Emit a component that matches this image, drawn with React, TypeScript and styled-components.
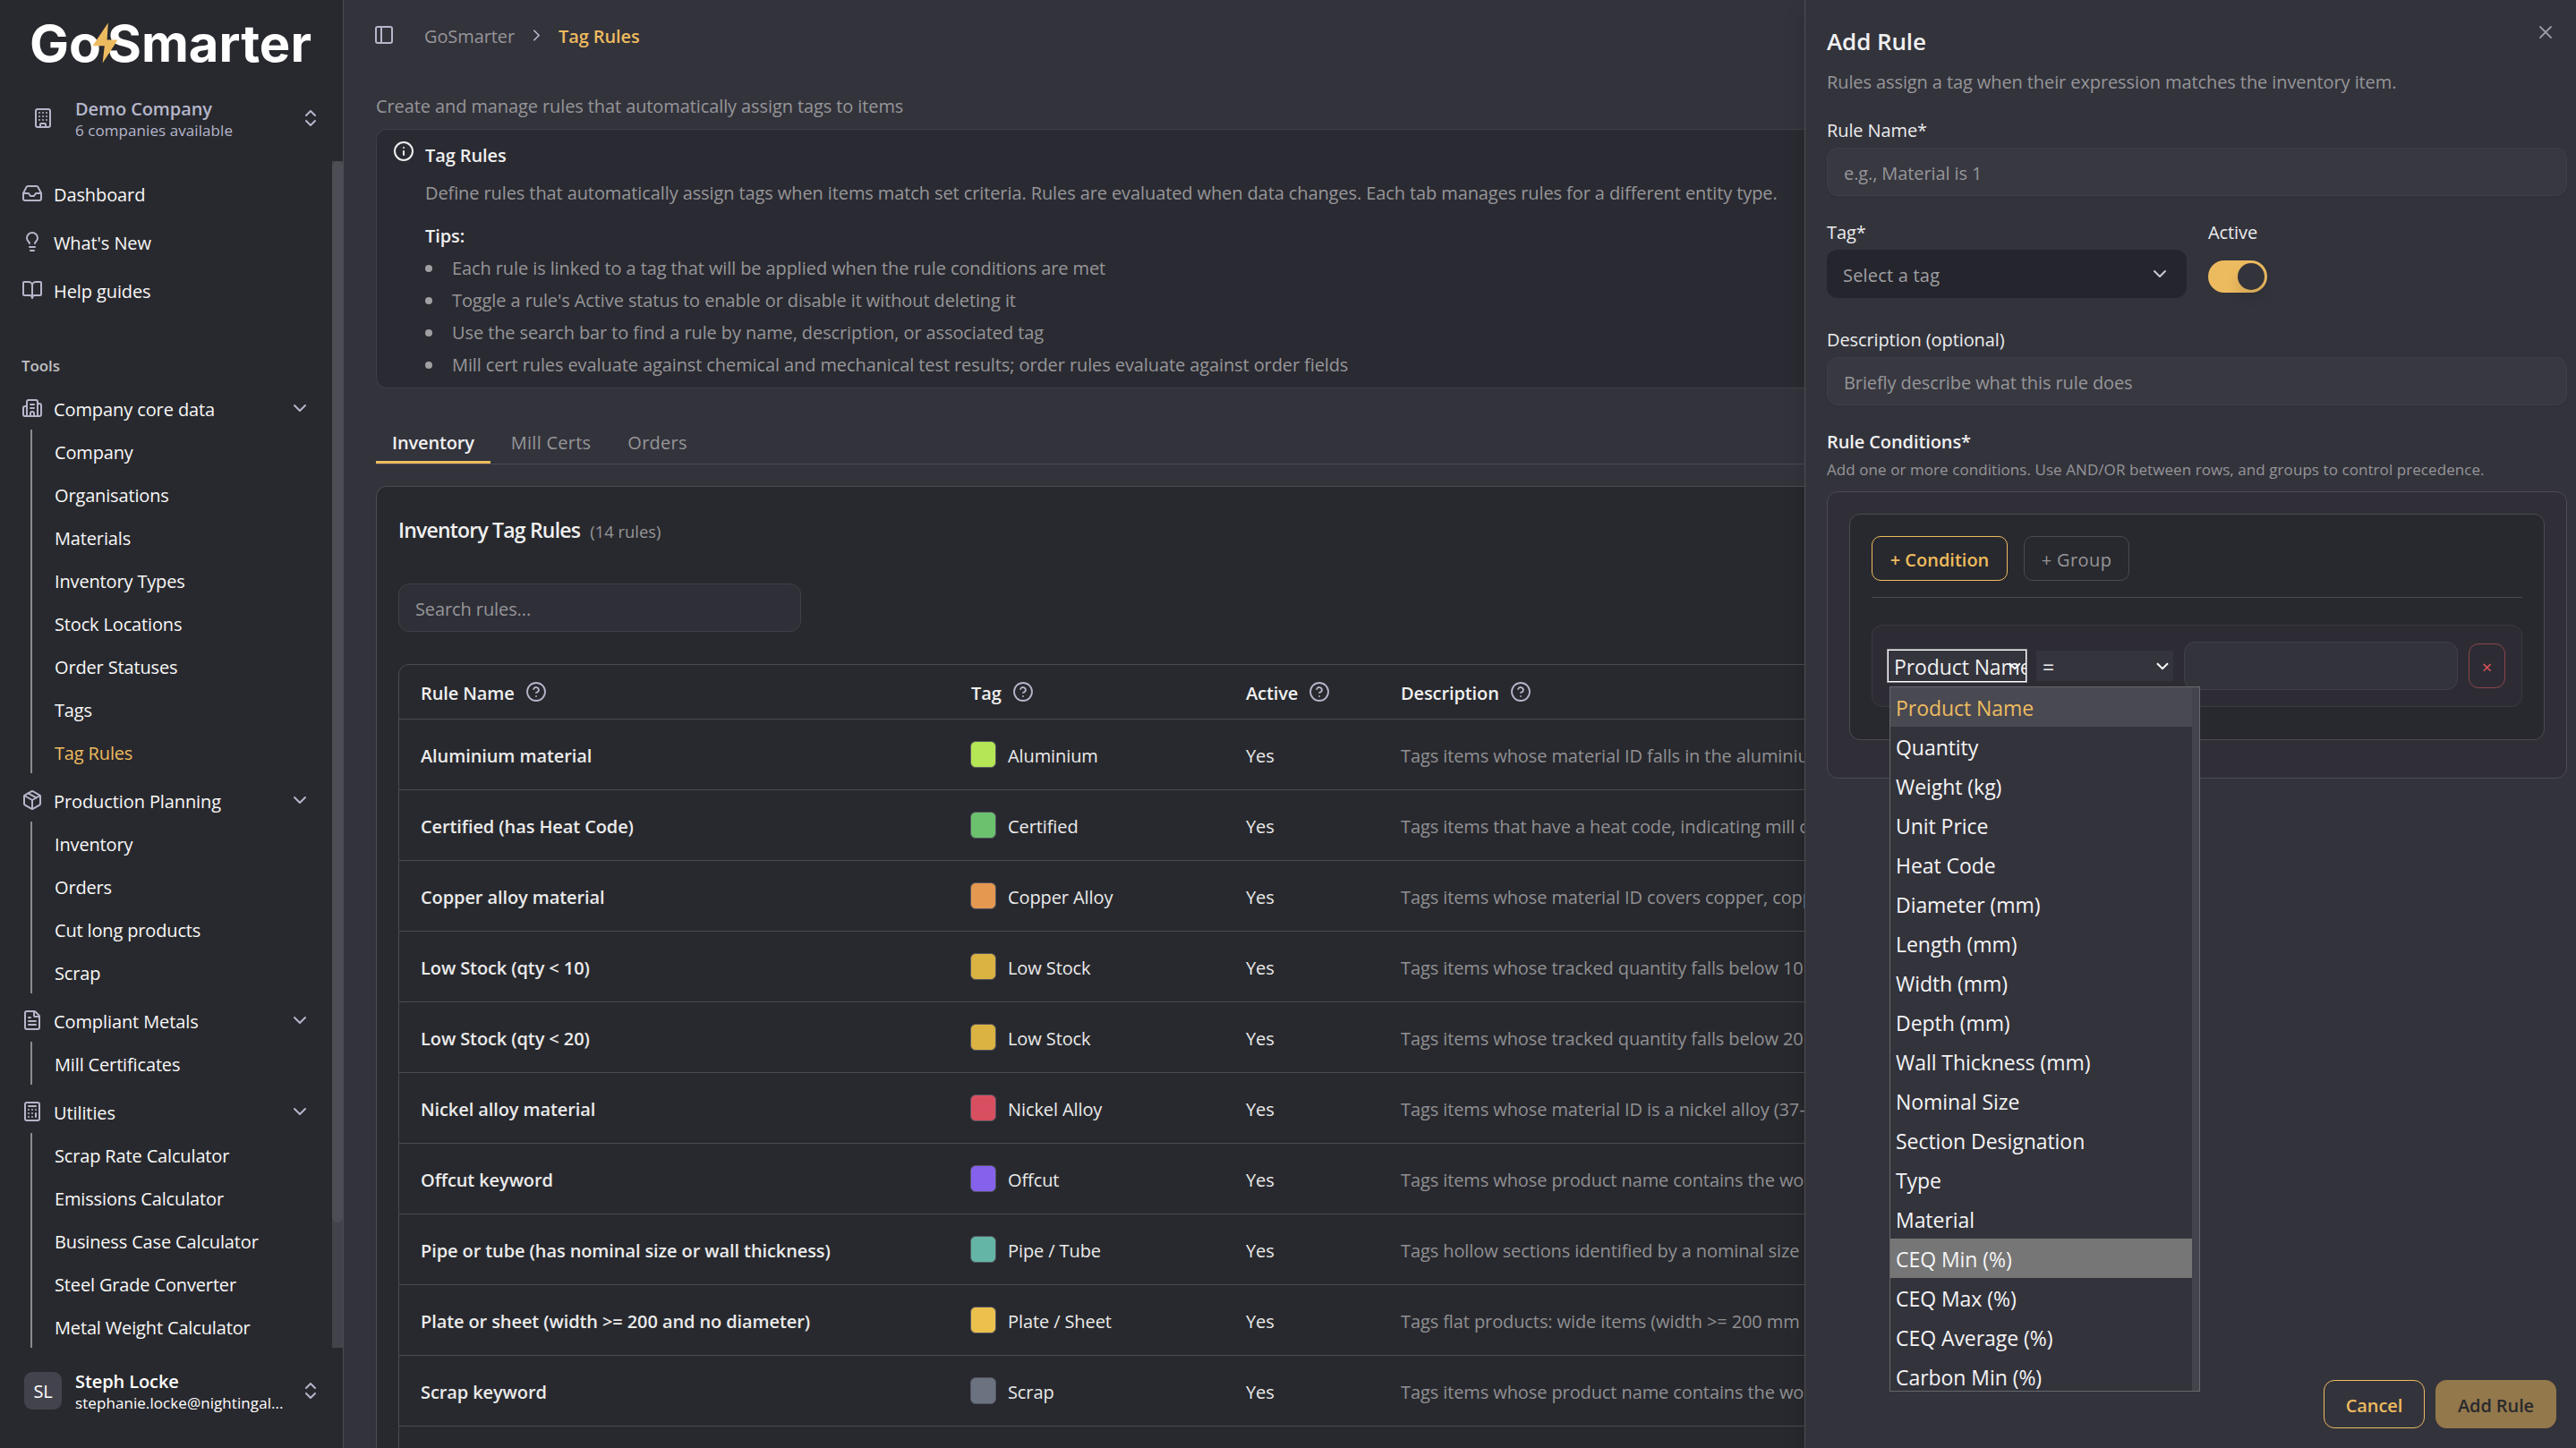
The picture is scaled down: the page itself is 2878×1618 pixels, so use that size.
import React from 'react';
import styled, { createGlobalStyle, css } from 'styled-components';
import {
  BookOpen,
  Building,
  Building2,
  Calculator,
  ChevronDown,
  ChevronRight,
  ChevronsUpDown,
  CircleHelp,
  FileText,
  Inbox,
  Info,
  Lightbulb,
  Package,
  PanelLeft,
  X
} from 'lucide-react';

const colors = {
  page: '#33333c',
  sidebar: '#28292e',
  card: '#28292e',
  border: '#4a4b53',
  borderSoft: '#3f3f48',
  text: '#f0f0f0',
  muted: '#969698',
  icon: '#b5b6ca',
  accent: '#edbb5f'
};

const NAV_LINKS = [
  { label: 'Dashboard', icon: Inbox },
  { label: "What's New", icon: Lightbulb },
  { label: 'Help guides', icon: BookOpen }
];

const NAV_GROUPS = [
  {
    label: 'Company core data',
    icon: Building2,
    items: ['Company', 'Organisations', 'Materials', 'Inventory Types', 'Stock Locations', 'Order Statuses', 'Tags', 'Tag Rules']
  },
  {
    label: 'Production Planning',
    icon: Package,
    items: ['Inventory', 'Orders', 'Cut long products', 'Scrap']
  },
  {
    label: 'Compliant Metals',
    icon: FileText,
    items: ['Mill Certificates']
  },
  {
    label: 'Utilities',
    icon: Calculator,
    items: ['Scrap Rate Calculator', 'Emissions Calculator', 'Business Case Calculator', 'Steel Grade Converter', 'Metal Weight Calculator']
  }
];

const TIPS = [
  'Each rule is linked to a tag that will be applied when the rule conditions are met',
  "Toggle a rule's Active status to enable or disable it without deleting it",
  'Use the search bar to find a rule by name, description, or associated tag',
  'Mill cert rules evaluate against chemical and mechanical test results; order rules evaluate against order fields'
];

const TABS = ['Inventory', 'Mill Certs', 'Orders'];

const COLUMNS = ['Rule Name', 'Tag', 'Active', 'Description'];

const RULES = [
  { name: 'Aluminium material', tag: 'Aluminium', color: '#b5e655', description: 'Tags items whose material ID falls in the aluminium' },
  { name: 'Certified (has Heat Code)', tag: 'Certified', color: '#6bc16e', description: 'Tags items that have a heat code, indicating mill certs' },
  { name: 'Copper alloy material', tag: 'Copper Alloy', color: '#e59850', description: 'Tags items whose material ID covers copper, copper' },
  { name: 'Low Stock (qty < 10)', tag: 'Low Stock', color: '#dbb342', description: 'Tags items whose tracked quantity falls below 10' },
  { name: 'Low Stock (qty < 20)', tag: 'Low Stock', color: '#dbb342', description: 'Tags items whose tracked quantity falls below 20' },
  { name: 'Nickel alloy material', tag: 'Nickel Alloy', color: '#d94f62', description: 'Tags items whose material ID is a nickel alloy (37-' },
  { name: 'Offcut keyword', tag: 'Offcut', color: '#8561ec', description: 'Tags items whose product name contains the word' },
  { name: 'Pipe or tube (has nominal size or wall thickness)', tag: 'Pipe / Tube', color: '#64b5a6', description: 'Tags hollow sections identified by a nominal size' },
  { name: 'Plate or sheet (width >= 200 and no diameter)', tag: 'Plate / Sheet', color: '#ecc04c', description: 'Tags flat products: wide items (width >= 200 mm' },
  { name: 'Scrap keyword', tag: 'Scrap', color: '#6b7280', description: 'Tags items whose product name contains the word' }
];

const FIELDS = [
  'Product Name',
  'Quantity',
  'Weight (kg)',
  'Unit Price',
  'Heat Code',
  'Diameter (mm)',
  'Length (mm)',
  'Width (mm)',
  'Depth (mm)',
  'Wall Thickness (mm)',
  'Nominal Size',
  'Section Designation',
  'Type',
  'Material',
  'CEQ Min (%)',
  'CEQ Max (%)',
  'CEQ Average (%)',
  'Carbon Min (%)'
];

const Logo = () => (
  <svg width="383" height="84" viewBox="0 0 383 84">
    <g fill="#ffffff" fontFamily="Inter, sans-serif" fontWeight="700" fontSize="56" letterSpacing="0">
      <text x="33" y="68.5" textLength="80" lengthAdjust="spacingAndGlyphs">Go</text>
      <text x="120" y="68.5" textLength="228" lengthAdjust="spacingAndGlyphs">Smarter</text>
    </g>
    <polygon points="120.8,25.5 103.5,51.3 116.8,51.3 114.6,70.5 131.6,44.5 119.6,44.5" fill={colors.accent} />
  </svg>
);

const Sidebar = () => (
  <SidebarWrapper>
    <LogoRow>
      <Logo />
    </LogoRow>
    <AccountRow $color={colors.icon}>
      <AccountIcon>
        <Building size={24} />
      </AccountIcon>
      <AccountInfo>
        <AccountTitle>Demo Company</AccountTitle>
        <AccountSub>6 companies available</AccountSub>
      </AccountInfo>
      <ChevronsUpDown size={24} color={colors.icon} />
    </AccountRow>
    <NavScroll>
      <Nav>
        {NAV_LINKS.map(({ label, icon: Icon }) => (
          <NavLink key={label}>
            <Icon size={24} color={colors.icon} />
            <NavText>{label}</NavText>
          </NavLink>
        ))}
        <NavHeading>Tools</NavHeading>
        {NAV_GROUPS.map(({ label, icon: Icon, items }) => (
          <NavGroup key={label}>
            <NavGroupHeader>
              <Icon size={24} color={colors.icon} />
              <NavText>{label}</NavText>
              <ChevronDown size={24} color={colors.icon} />
            </NavGroupHeader>
            <NavSubList>
              {items.map((item) => (
                <NavSubItem key={item} $active={item === 'Tag Rules'}>{item}</NavSubItem>
              ))}
            </NavSubList>
          </NavGroup>
        ))}
      </Nav>
      <ScrollTrack>
        <ScrollThumb />
      </ScrollTrack>
    </NavScroll>
    <AccountRow $color="#ffffff">
      <Avatar>SL</Avatar>
      <AccountInfo>
        <AccountTitle>Steph Locke</AccountTitle>
        <AccountSub>stephanie.locke@nightingal...</AccountSub>
      </AccountInfo>
      <ChevronsUpDown size={24} color={colors.icon} />
    </AccountRow>
  </SidebarWrapper>
);

const TagRulesPage = () => (
  <Main>
    <TopBar>
      <PanelLeft size={24} color={colors.icon} />
      <Breadcrumb>
        <Crumb>GoSmarter</Crumb>
        <ChevronRight size={21} color={colors.icon} />
        <Crumb $current>Tag Rules</Crumb>
      </Breadcrumb>
    </TopBar>
    <Subtitle>Create and manage rules that automatically assign tags to items</Subtitle>
    <InfoCard>
      <Info size={24} color={colors.text} />
      <InfoBody>
        <InfoTitle>Tag Rules</InfoTitle>
        <InfoText>
          Define rules that automatically assign tags when items match set criteria. Rules are evaluated when data changes. Each tab manages rules for a different entity type.
        </InfoText>
        <TipsTitle>Tips:</TipsTitle>
        <TipList>
          {TIPS.map((tip) => (
            <Tip key={tip}>{tip}</Tip>
          ))}
        </TipList>
      </InfoBody>
    </InfoCard>
    <TabBar>
      {TABS.map((tab, i) => (
        <Tab key={tab} $active={i === 0}>{tab}</Tab>
      ))}
    </TabBar>
    <RulesCard>
      <RulesTitle>
        Inventory Tag Rules <RulesCount>(14 rules)</RulesCount>
      </RulesTitle>
      <SearchBox>Search rules...</SearchBox>
      <Table>
        <HeaderRow>
          {COLUMNS.map((column) => (
            <HeaderCell key={column}>
              <span>{column}</span>
              <CircleHelp size={24} color={colors.icon} strokeWidth={1.8} />
            </HeaderCell>
          ))}
        </HeaderRow>
        {RULES.map((rule) => (
          <Row key={rule.name}>
            <Cell $strong>{rule.name}</Cell>
            <Cell>
              <Swatch $color={rule.color} />
              {rule.tag}
            </Cell>
            <Cell>Yes</Cell>
            <Cell $muted>{rule.description}</Cell>
          </Row>
        ))}
        <Row />
      </Table>
    </RulesCard>
  </Main>
);

const AddRuleSheet = () => (
  <Sheet>
    <CloseButton>
      <X size={24} strokeWidth={1.8} />
    </CloseButton>
    <SheetTitle>Add Rule</SheetTitle>
    <SheetDescription>Rules assign a tag when their expression matches the inventory item.</SheetDescription>
    <Field>
      <Label>Rule Name*</Label>
      <TextInput>e.g., Material is 1</TextInput>
    </Field>
    <TagRow>
      <Field>
        <Label>Tag*</Label>
        <TagSelect>
          <span>Select a tag</span>
          <ChevronDown size={24} color="#c9c9d4" />
        </TagSelect>
      </Field>
      <Field>
        <Label>Active</Label>
        <Switch>
          <SwitchThumb />
        </Switch>
      </Field>
    </TagRow>
    <Field>
      <Label>Description (optional)</Label>
      <TextInput>Briefly describe what this rule does</TextInput>
    </Field>
    <ConditionsTitle>Rule Conditions*</ConditionsTitle>
    <ConditionsHint>Add one or more conditions. Use AND/OR between rows, and groups to control precedence.</ConditionsHint>
    <BuilderBox>
      <GroupBox>
        <GroupActions>
          <AddConditionButton>+ Condition</AddConditionButton>
          <AddGroupButton>+ Group</AddGroupButton>
        </GroupActions>
        <ConditionRow>
          <FieldPicker>
            <NativeSelect $focused>
              <span>Product Name</span>
              <SelectArrow />
            </NativeSelect>
            <Menu>
              <MenuItems>
                {FIELDS.map((field, i) => (
                  <MenuItem key={field} $selected={i === 0} $hovered={field === 'CEQ Min (%)'}>{field}</MenuItem>
                ))}
              </MenuItems>
              <MenuScroll />
            </Menu>
          </FieldPicker>
          <NativeSelect>
            <span>=</span>
            <SelectArrow />
          </NativeSelect>
          <ValueInput />
          <RemoveButton>×</RemoveButton>
        </ConditionRow>
      </GroupBox>
    </BuilderBox>
    <SheetFooter>
      <CancelButton>Cancel</CancelButton>
      <SubmitButton>Add Rule</SubmitButton>
    </SheetFooter>
  </Sheet>
);

const SelectArrow = () => (
  <ArrowSvg width="14" height="9" viewBox="0 0 14 9" fill="none" stroke="#ffffff" strokeWidth="2">
    <path d="M1 1.2l6 6 6-6" />
  </ArrowSvg>
);

const App: React.FC = () => (
  <>
    <GlobalStyle />
    <Layout>
      <Sidebar />
      <TagRulesPage />
      <AddRuleSheet />
    </Layout>
  </>
);

// Styled Components
const GlobalStyle = createGlobalStyle`
  * {
    box-sizing: border-box;
  }

  body {
    margin: 0;
    background: ${colors.page};
    color: ${colors.text};
    font-family: 'Open Sans', 'Noto Sans', sans-serif;
    font-size: 20px;
    line-height: 30px;
    letter-spacing: -0.1px;
  }

  svg {
    flex-shrink: 0;
  }
`;

const Layout = styled.div`
  position: relative;
  display: flex;
  width: 100vw;
  height: 100vh;
  overflow: hidden;
  white-space: nowrap;
`;

const SidebarWrapper = styled.aside`
  display: flex;
  flex-direction: column;
  flex-shrink: 0;
  width: 384px;
  background: ${colors.sidebar};
  border-right: 1px solid ${colors.border};
`;

const LogoRow = styled.div`
  height: 84px;

  svg {
    display: block;
  }
`;

const AccountRow = styled.div<{ $color: string }>`
  display: flex;
  align-items: center;
  height: 96px;
  padding: 0 24px 0 27px;
  color: ${({ $color }) => $color};
`;

const AccountIcon = styled.div`
  display: flex;
  justify-content: center;
  width: 42px;
`;

const Avatar = styled.div`
  display: flex;
  align-items: center;
  justify-content: center;
  width: 42px;
  height: 42px;
  padding-top: 2px;
  border-radius: 9px;
  background: #43434d;
`;

const AccountInfo = styled.div`
  flex: 1;
  min-width: 0;
  padding: 2px 0 0 15px;
`;

const AccountTitle = styled.div`
  font-weight: 600;
  line-height: 25px;
`;

const AccountSub = styled.div`
  font-size: 17px;
  line-height: 24px;
  letter-spacing: 0.07px;
`;

const NavScroll = styled.div`
  display: flex;
  height: 1326px;
`;

const Nav = styled.nav`
  flex: 1;
  padding: 9px 0 0 24px;
  color: #f8f8f8;
`;

const NavLink = styled.div`
  display: flex;
  align-items: center;
  gap: 12px;
  height: 54px;
`;

const NavText = styled.span`
  flex: 1;
  padding-top: 3px;
`;

const NavHeading = styled.div`
  height: 81px;
  padding-top: 43px;
  color: #bfbfc1;
  font-size: 17px;
  font-weight: 600;
`;

const NavGroup = styled.div`
  margin-bottom: 6px;
`;

const NavGroupHeader = styled(NavLink)`
  height: 48px;
  padding-right: 24px;
`;

const NavSubList = styled.div`
  margin-left: 10px;
  padding-left: 25px;
  border-left: 2px solid #8b8b8d;
  letter-spacing: -0.15px;
`;

const NavSubItem = styled.div<{ $active?: boolean }>`
  height: 48px;
  padding-top: 2px;
  line-height: 48px;
  color: ${({ $active }) => ($active ? colors.accent : 'inherit')};
`;

const ScrollTrack = styled.div`
  width: 12px;
  background: #43434b;
`;

const ScrollThumb = styled.div`
  height: 1186px;
  border-radius: 6px;
  background: #4d4d56;
`;

const Main = styled.main`
  flex: 1;
  min-width: 0;
  padding-left: 36px;
`;

const TopBar = styled.header`
  display: flex;
  align-items: center;
  gap: 33px;
  height: 78px;

  > svg {
    margin-left: -3px;
  }
`;

const Breadcrumb = styled.div`
  display: flex;
  align-items: center;
  gap: 14px;
`;

const Crumb = styled.span<{ $current?: boolean }>`
  padding-top: 3px;
  color: ${({ $current }) => ($current ? colors.accent : colors.muted)};
  font-weight: ${({ $current }) => ($current ? 600 : 400)};
`;

const Subtitle = styled.p`
  height: 66px;
  margin: 0;
  padding-top: 26px;
  color: ${colors.muted};
`;

const InfoCard = styled.section`
  display: flex;
  gap: 12px;
  height: 290px;
  padding: 12px 18px;
  border: 1px solid ${colors.borderSoft};
  border-right: none;
  border-radius: 12px 0 0 12px;
  background: #2a2a32;
`;

const InfoBody = styled.div`
  padding-top: 1px;
  color: ${colors.muted};
`;

const InfoTitle = styled.div`
  padding-top: 1px;
  color: ${colors.text};
  font-weight: 600;
`;

const InfoText = styled.p`
  margin: 12px 0 18px;
`;

const TipsTitle = styled(InfoTitle)`
  padding-top: 0;
  margin-bottom: 3px;
`;

const TipList = styled.ul`
  margin: 0;
  padding: 0;
  list-style: none;
`;

const Tip = styled.li`
  display: flex;
  align-items: center;
  gap: 22px;
  height: 36px;

  &::before {
    content: '';
    width: 8px;
    height: 8px;
    border-radius: 50%;
    background: #a0a0a2;
  }
`;

const TabBar = styled.div`
  display: flex;
  gap: 5px;
  height: 49px;
  margin-top: 36px;
  border-bottom: 1px solid ${colors.border};
`;

const Tab = styled.div<{ $active?: boolean }>`
  height: 48px;
  padding: 10px 18px 0;
  color: ${({ $active }) => ($active ? colors.text : colors.muted)};
  font-weight: ${({ $active }) => ($active ? 600 : 500)};
  letter-spacing: ${({ $active }) => ($active ? '-0.15px' : '0.25px')};
  border-bottom: 3px solid ${({ $active }) => ($active ? colors.accent : 'transparent')};
`;

const RulesCard = styled.section`
  height: 1100px;
  margin-top: 24px;
  padding: 33px 0 0 24px;
  border: 1px solid ${colors.border};
  border-right: none;
  border-radius: 12px 0 0 0;
  background: ${colors.card};
`;

const RulesTitle = styled.h2`
  height: 75px;
  margin: 0;
  font-size: 23px;
  font-weight: 600;
  letter-spacing: -0.8px;
`;

const RulesCount = styled.span`
  margin-left: 6px;
  color: ${colors.muted};
  font-size: 18.4px;
  font-weight: 400;
  letter-spacing: 0;
`;

const inputBase = css`
  height: 54px;
  padding: 13px 18px 0;
  border: 1px solid ${colors.borderSoft};
  border-radius: 12px;
  color: ${colors.muted};
`;

const SearchBox = styled.div`
  ${inputBase}
  width: 450px;
  background: #2f2f38;
`;

const Table = styled.div`
  margin-top: 36px;
  border: 1px solid ${colors.border};
  border-radius: 12px 0 0 0;
`;

const Row = styled.div`
  display: grid;
  grid-template-columns: 615px 307px 173px 1fr;
  height: 79px;
  border-bottom: 1px solid ${colors.border};
`;

const HeaderRow = styled(Row)`
  height: 61px;
  font-weight: 600;
`;

const HeaderCell = styled.div`
  display: flex;
  align-items: center;
  gap: 12px;
  padding-left: 24px;

  span {
    padding-top: 3px;
  }
`;

const Cell = styled.div<{ $strong?: boolean; $muted?: boolean }>`
  display: flex;
  align-items: center;
  gap: 13px;
  padding: 3px 0 0 24px;
  color: ${({ $muted }) => ($muted ? '#909093' : '#ebebeb')};
  font-weight: ${({ $strong }) => ($strong ? 600 : 400)};
`;

const Swatch = styled.span<{ $color: string }>`
  width: 29px;
  height: 30px;
  margin: -3px 0 0 -1px;
  border: 1px solid #565761;
  border-radius: 6px;
  background: ${({ $color }) => $color};
`;

const Sheet = styled.section`
  position: absolute;
  top: 0;
  right: 0;
  display: flex;
  flex-direction: column;
  width: 862px;
  height: 100%;
  padding: 31px 10px 22px 24px;
  border-left: 1px solid #4d4e56;
  background: ${colors.page};
  box-shadow: 0 10px 22px rgba(0, 0, 0, 0.14);
`;

const CloseButton = styled.div`
  position: absolute;
  top: 24px;
  right: 22px;
  display: flex;
  color: #9a9aa6;
`;

const SheetTitle = styled.h2`
  margin: 0;
  font-size: 26px;
  font-weight: 600;
`;

const SheetDescription = styled.p`
  margin: 16px 0 22px;
  color: ${colors.muted};
`;

const Field = styled.div`
  display: flex;
  flex-direction: column;
  gap: 6px;
  margin-bottom: 24px;
`;

const Label = styled.label`
  height: 30px;
  padding-top: 2px;
  color: #ececec;
`;

const TextInput = styled.div`
  ${inputBase}
  background: #383841;
  box-shadow: 0 1px 2px rgba(0, 0, 0, 0.08);
`;

const TagRow = styled.div`
  display: grid;
  grid-template-columns: 402px 1fr;
  gap: 24px;
  margin-bottom: 6px;
`;

const TagSelect = styled.div`
  display: flex;
  align-items: center;
  justify-content: space-between;
  height: 54px;
  padding: 0 18px;
  border-radius: 12px;
  background: #25252e;
  color: #a0a0a2;
  letter-spacing: 0.2px;

  span {
    padding-top: 3px;
  }
`;

const Switch = styled.div`
  display: flex;
  justify-content: flex-end;
  width: 66px;
  height: 36px;
  margin-top: 12px;
  padding: 3px;
  border-radius: 18px;
  background: ${colors.accent};
`;

const SwitchThumb = styled.div`
  width: 30px;
  height: 30px;
  border-radius: 50%;
  background: ${colors.page};
  box-shadow: 0 8px 14px rgba(0, 0, 0, 0.12);
`;

const ConditionsTitle = styled.div`
  padding-top: 2px;
  font-weight: 600;
`;

const ConditionsHint = styled.div`
  padding-top: 1px;
  color: ${colors.muted};
  font-size: 17px;
  letter-spacing: 0.07px;
`;

const BuilderBox = styled.div`
  height: 321px;
  margin-top: 9px;
  padding: 24px;
  border: 1px solid ${colors.border};
  border-radius: 12px;
  background: #302f38;
`;

const GroupBox = styled.div`
  height: 253px;
  padding: 24px;
  border: 1px solid ${colors.border};
  border-radius: 12px;
  background: ${colors.card};
`;

const GroupActions = styled.div`
  display: flex;
  gap: 18px;
  height: 69px;
  border-bottom: 1px solid ${colors.border};
`;

const AddConditionButton = styled.div`
  width: 152px;
  height: 50px;
  padding-top: 11px;
  border: 1px solid ${colors.accent};
  border-radius: 10px;
  color: ${colors.accent};
  font-weight: 600;
  letter-spacing: 0;
  text-align: center;
`;

const AddGroupButton = styled(AddConditionButton)`
  width: 118px;
  border-color: ${colors.border};
  color: ${colors.muted};
  font-weight: 500;
  letter-spacing: 0.4px;
`;

const ConditionRow = styled.div`
  display: flex;
  align-items: center;
  gap: 12px;
  height: 92px;
  margin-top: 30px;
  padding: 0 18px;
  border: 1px solid #3a3a42;
  border-radius: 12px;
  background: #2d2c35;
`;

const FieldPicker = styled.div`
  position: relative;
  width: 153px;
`;

const NativeSelect = styled.div<{ $focused?: boolean }>`
  position: relative;
  width: 153px;
  height: 34px;
  padding: 0 0 0 ${({ $focused }) => ($focused ? '6px' : '7px')};
  overflow: hidden;
  background: #34343d;
  font-size: 23px;
  line-height: 36px;
  ${({ $focused }) =>
    $focused &&
    css`
      outline: 1px solid #ffffff;
      box-shadow: 0 0 0 2px #97979b;
    `}
`;

const ArrowSvg = styled.svg`
  position: absolute;
  top: 13px;
  right: 5px;
`;

const Menu = styled.div`
  position: absolute;
  top: 40px;
  left: 1px;
  z-index: 1;
  display: flex;
  width: 347px;
  height: 788px;
  border: 1px solid #67676c;
  background: #33333c;
  overflow: hidden;
`;

const MenuItems = styled.div`
  flex: 1;
`;

const MenuItem = styled.div<{ $selected?: boolean; $hovered?: boolean }>`
  height: 44px;
  padding: 1px 0 0 6px;
  font-size: 23px;
  line-height: 44px;
  letter-spacing: -0.05px;
  color: ${({ $selected }) => ($selected ? colors.accent : '#f4f4f4')};
  background: ${({ $selected, $hovered }) => ($selected ? '#494952' : $hovered ? '#767676' : 'transparent')};
`;

const MenuScroll = styled.div`
  width: 8px;
  background: #43434c;
`;

const ValueInput = styled.div`
  flex: 1;
  height: 54px;
  border: 1px solid #41414a;
  border-radius: 12px;
  background: #33333c;
`;

const RemoveButton = styled.div`
  width: 41px;
  height: 50px;
  padding-top: 11px;
  border: 1px solid #8b4549;
  border-radius: 11px;
  color: #e0575a;
  text-align: center;
`;

const SheetFooter = styled.div`
  display: flex;
  justify-content: flex-end;
  gap: 12px;
  margin-top: auto;
  padding-right: 12px;
`;

const CancelButton = styled.div`
  width: 113px;
  height: 54px;
  padding-top: 13px;
  border: 1px solid ${colors.accent};
  border-radius: 12px;
  color: ${colors.accent};
  font-weight: 600;
  text-align: center;
`;

const SubmitButton = styled(CancelButton)`
  width: 135px;
  border-color: #93784b;
  background: #93784b;
  color: #29292e;
`;

export default App;
